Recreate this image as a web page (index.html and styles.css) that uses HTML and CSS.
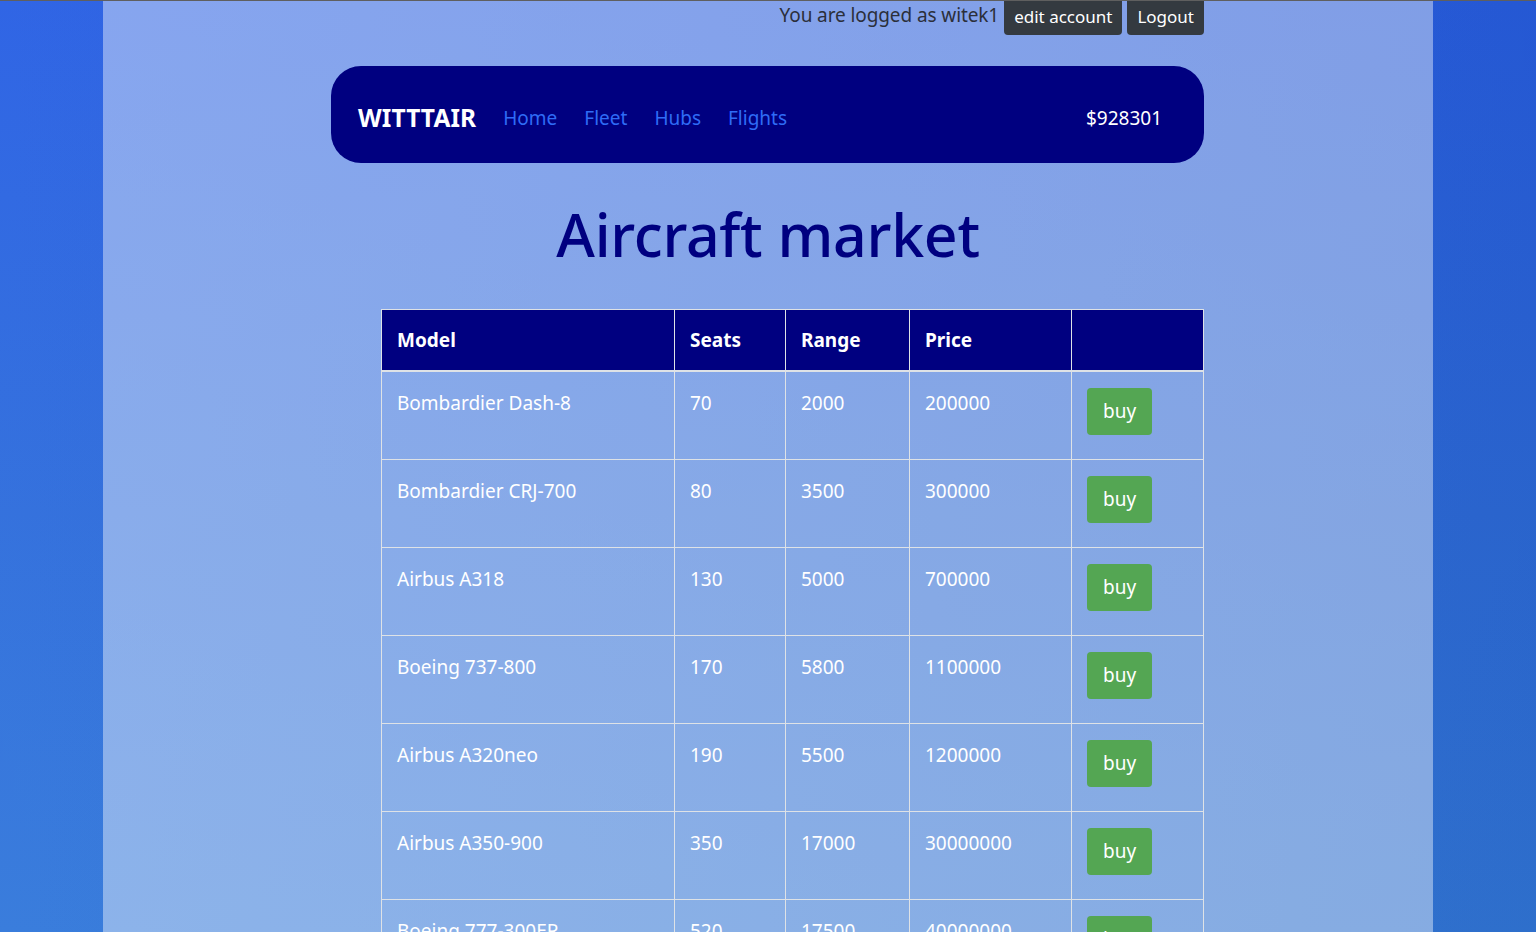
FILE: index.html
```html
<!DOCTYPE html>
<html lang="en">
<head>
<meta charset="utf-8">
<title>WITTTAIR - Aircraft market</title>
<link rel="stylesheet" href="styles.css">
</head>
<body>
<div class="topline"></div>
<div class="page">
  <div class="container">
    <div class="userbar">
      <span class="logged">You are logged as witek1</span>
      <a class="btn btn-dark" href="#">edit account</a>
      <a class="btn btn-dark" href="#">Logout</a>
    </div>
    <nav class="navbar">
      <a class="brand" href="#">WITTTAIR</a>
      <ul class="nav-links">
        <li><a href="#">Home</a></li>
        <li><a href="#">Fleet</a></li>
        <li><a href="#">Hubs</a></li>
        <li><a href="#">Flights</a></li>
      </ul>
      <span class="money">$928301</span>
    </nav>
    <h1 class="title">Aircraft market</h1>
    <table class="market">
      <thead>
        <tr>
          <th class="c-model">Model</th>
          <th class="c-seats">Seats</th>
          <th class="c-range">Range</th>
          <th class="c-price">Price</th>
          <th class="c-act"></th>
        </tr>
      </thead>
      <tbody>
        <tr><td>Bombardier Dash-8</td><td>70</td><td>2000</td><td>200000</td><td><button class="btn-buy">buy</button></td></tr>
        <tr><td>Bombardier CRJ-700</td><td>80</td><td>3500</td><td>300000</td><td><button class="btn-buy">buy</button></td></tr>
        <tr><td>Airbus A318</td><td>130</td><td>5000</td><td>700000</td><td><button class="btn-buy">buy</button></td></tr>
        <tr><td>Boeing 737-800</td><td>170</td><td>5800</td><td>1100000</td><td><button class="btn-buy">buy</button></td></tr>
        <tr><td>Airbus A320neo</td><td>190</td><td>5500</td><td>1200000</td><td><button class="btn-buy">buy</button></td></tr>
        <tr><td>Airbus A350-900</td><td>350</td><td>17000</td><td>30000000</td><td><button class="btn-buy">buy</button></td></tr>
        <tr><td>Boeing 777-300ER</td><td>520</td><td>17500</td><td>40000000</td><td><button class="btn-buy">buy</button></td></tr>
      </tbody>
    </table>
  </div>
</div>
</body>
</html>
```

FILE: styles.css
```css
html, body {
  margin: 0;
  padding: 0;
}

body {
  font-family: "Noto Sans", "Open Sans", "DejaVu Sans", sans-serif;
  background:
    linear-gradient(to right, rgba(255,255,255,0.04), rgba(0,0,20,0.08)),
    linear-gradient(to bottom, #285fe4 0%, #2d6cdc 55%, #3278db 100%);
  background-attachment: fixed;
  min-height: 100vh;
}

.topline {
  height: 1px;
  background: #5f5f5f;
}

.page {
  width: 1330px;
  margin: 0 auto;
  background: rgba(255, 255, 255, 0.42);
  min-height: 1200px;
}

.container {
  width: 874px;
  margin: 0 auto;
  padding-bottom: 40px;
}

/* user bar */
.userbar {
  display: flex;
  justify-content: flex-end;
  align-items: flex-start;
  gap: 5px;
  padding-right: 1px;
  height: 34px;
}

.logged {
  font-size: 19px;
  color: #2b2f3a;
  line-height: 28px;
  letter-spacing: -0.1px;
  margin-right: 0;
}

.btn {
  display: inline-block;
  text-decoration: none;
  font-size: 17px;
  line-height: 24px;
  padding: 4px 10px 6px;
  border-radius: 0 0 4px 4px;
}

.btn-dark {
  background: #343a40;
  color: #fff;
}

/* navbar */
.navbar {
  margin-top: 31px;
  height: 97px;
  box-sizing: border-box;
  padding: 6px 42px 0 27px;
  background: #000080;
  border-radius: 30px;
  display: flex;
  align-items: center;
  width: 873px;
}

.brand {
  color: #fff;
  font-weight: 700;
  font-size: 24.5px;
  text-decoration: none;
  letter-spacing: 0.1px;
  margin-right: 27px;
}

.nav-links {
  list-style: none;
  margin: 0;
  padding: 0;
  display: flex;
  gap: 27px;
  flex: 1;
}

.nav-links a {
  color: #2f6cf6;
  text-decoration: none;
  font-size: 19px;
}

.money {
  color: #fff;
  font-size: 19px;
}

/* title */
.title {
  margin: 31px 0 35px;
  text-align: center;
  color: #000080;
  font-size: 59px;
  font-weight: 500;
  line-height: 80px;
  letter-spacing: -0.3px;
}

/* table */
.market {
  margin-left: 50px;
  width: 823px;
  border-collapse: collapse;
  color: #fff;
  font-size: 19px;
}

.market th,
.market td {
  border: 1px solid #dee2e6;
  padding: 16px 15px;
  text-align: left;
  vertical-align: top;
  line-height: 30px;
}

.market th {
  background: #000080;
  font-weight: 700;
  padding-top: 15px;
  padding-bottom: 15px;
}

.market thead th {
  border-bottom-width: 2px;
}

.market td {
  font-weight: 400;
  height: 55px;
}

.c-model { width: 262px; }
.c-seats { width: 80px; }
.c-range { width: 93px; }
.c-price { width: 131px; }
.c-act { width: 101px; }

.btn-buy {
  display: block;
  background: #54a653;
  color: #fff;
  border: none;
  border-radius: 4px;
  font-family: inherit;
  font-size: 19px;
  height: 47px;
  padding: 0 16px 2px;
  cursor: pointer;
}
```
